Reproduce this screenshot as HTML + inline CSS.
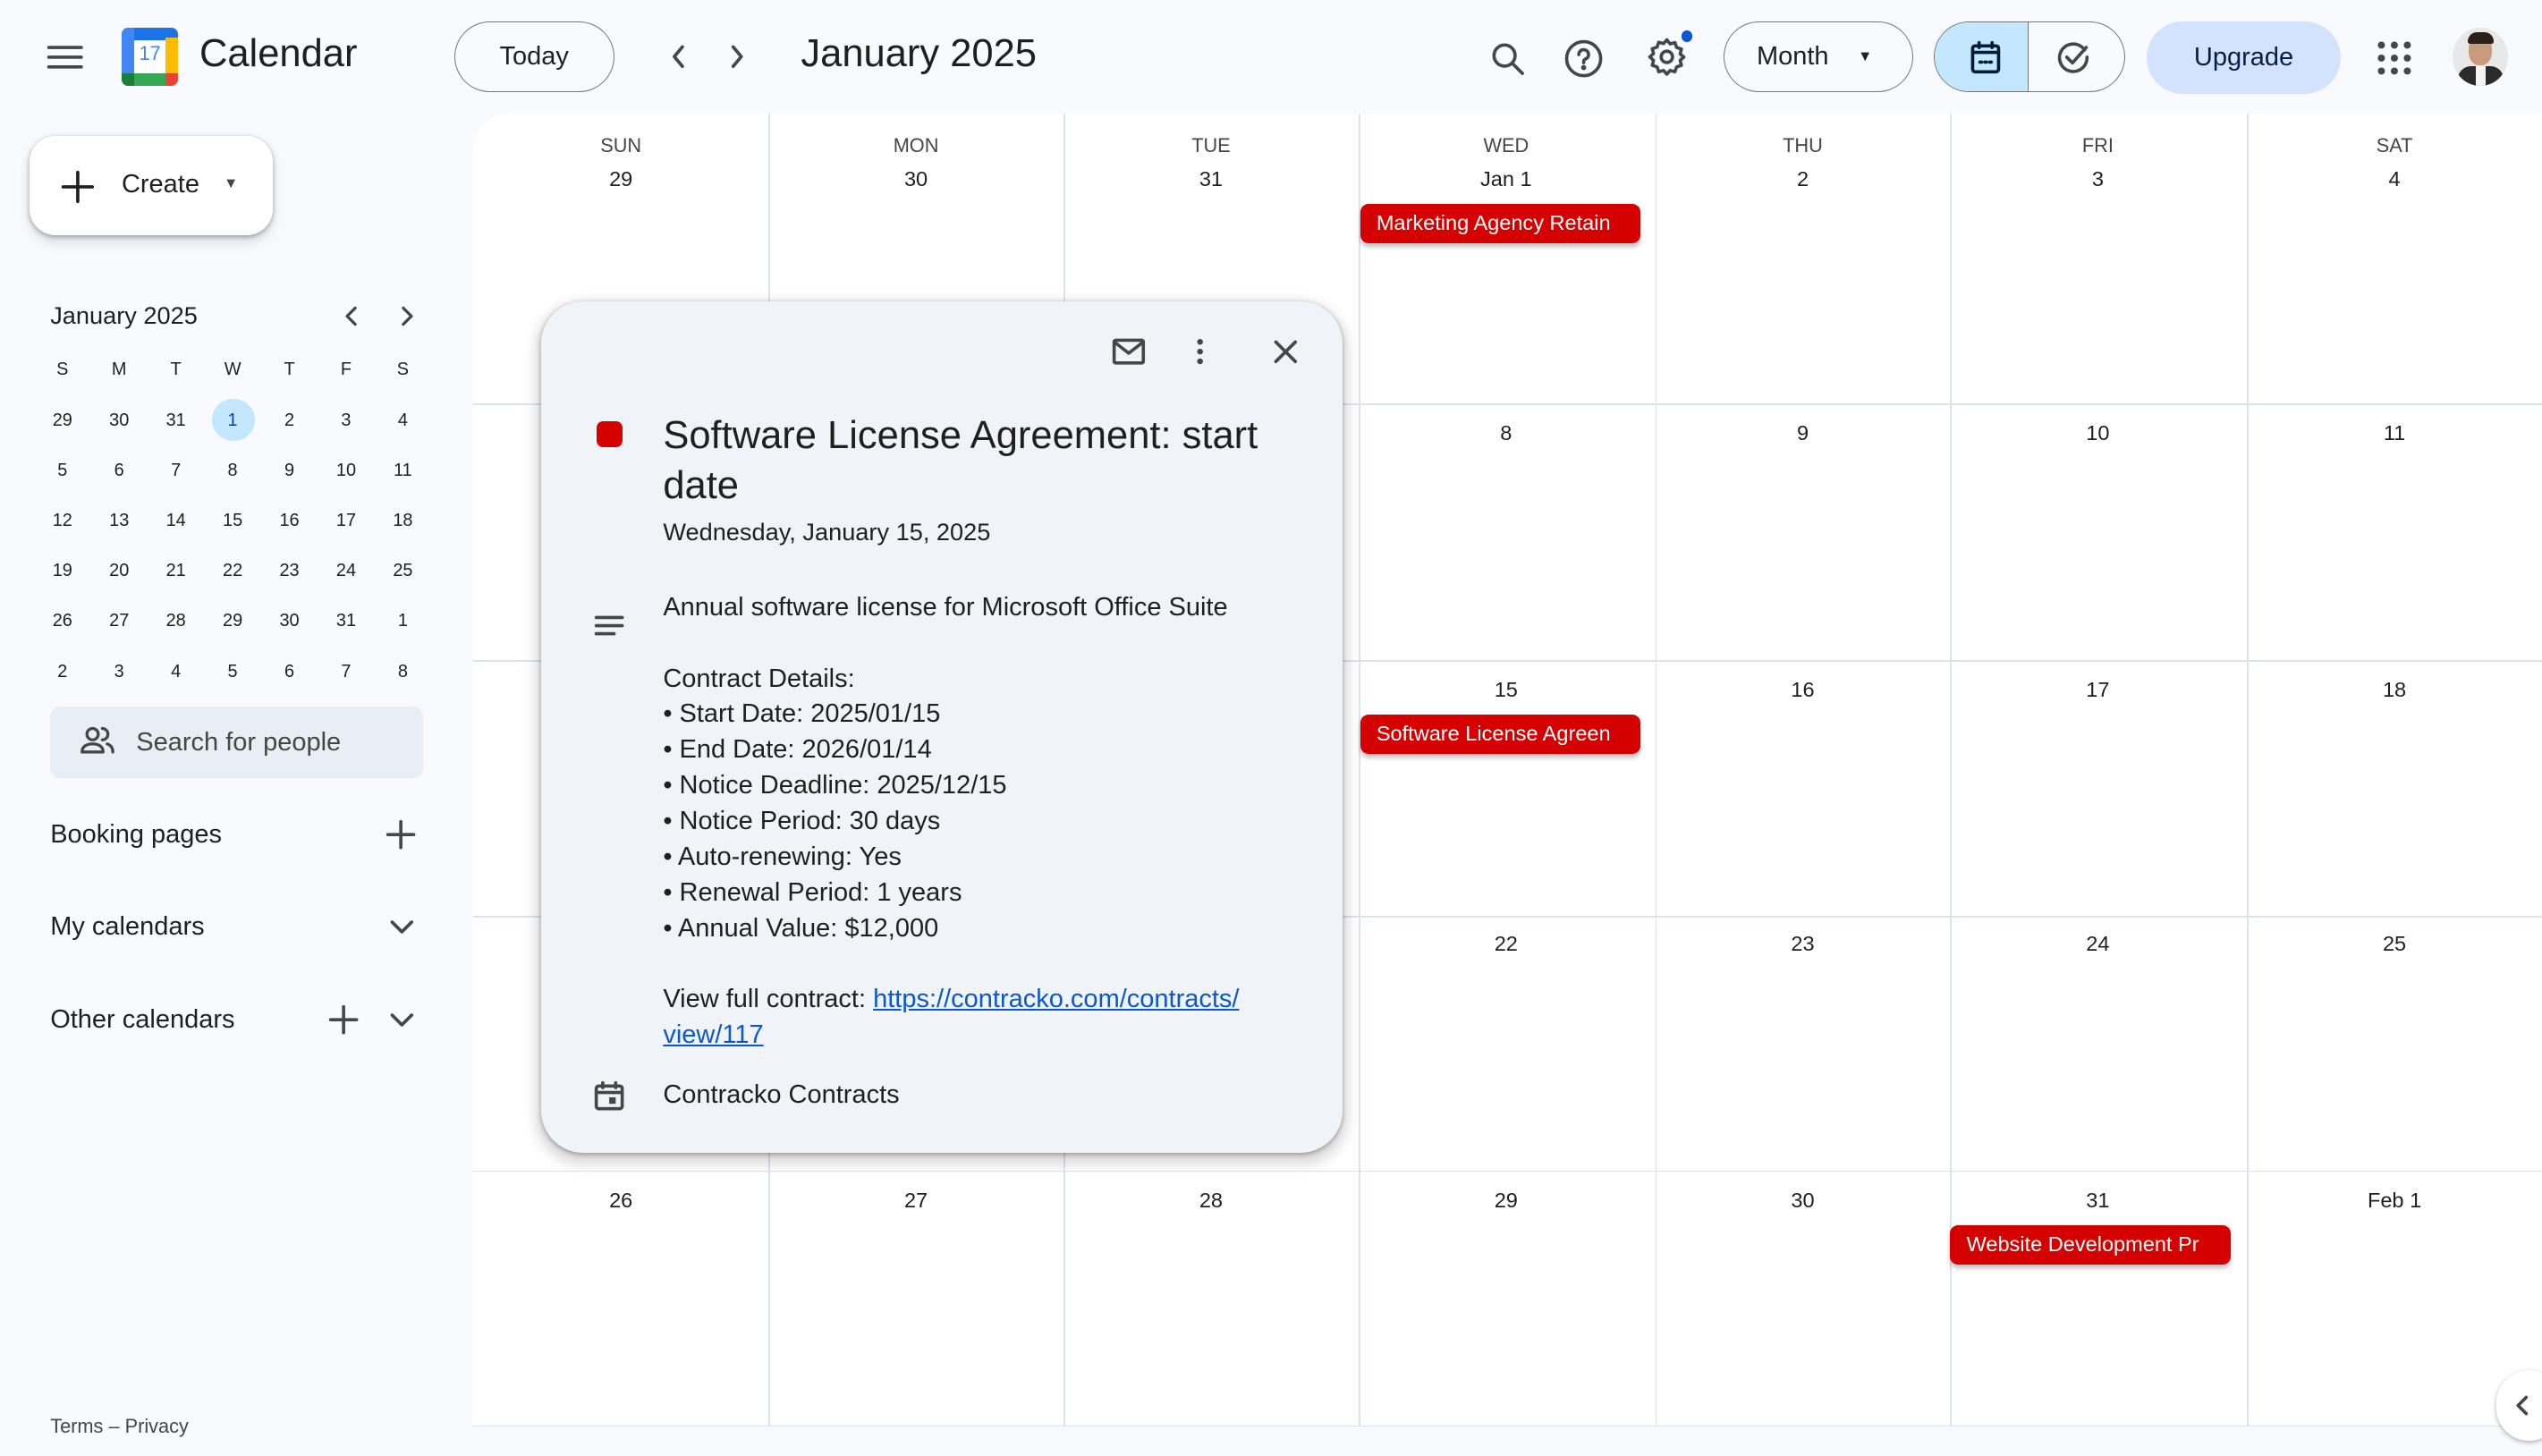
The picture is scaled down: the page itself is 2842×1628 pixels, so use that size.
<!DOCTYPE html>
<html><head><meta charset="utf-8"><style>
*{box-sizing:border-box;margin:0;padding:0}
html,body{width:2842px;height:1628px;overflow:hidden;background:#f8fafd}
#r{zoom:1.8125;position:relative;width:1568px;height:899px;font-family:"Liberation Sans",Arial,sans-serif;color:#1f1f1f;background:#f8fafd}
.a{position:absolute}
.ic{position:absolute;fill:none;stroke:#444746;stroke-width:2;stroke-linecap:round;stroke-linejoin:round}
.pill{position:absolute;border:1px solid #747775;border-radius:22px;display:flex;align-items:center;justify-content:center;font-size:16px;color:#1f1f1f}
.mini{position:absolute;left:21px;width:245px;font-size:11px;color:#1f1f1f}
.mini div{position:absolute;width:35px;text-align:center}
.dh{position:absolute;width:182px;text-align:center;font-size:12px;color:#444746}
.dn{position:absolute;width:182px;text-align:center;font-size:13px;color:#1f1f1f}
.ev{position:absolute;height:24px;background:#d50000;color:#fff;font-size:13px;border-radius:5px;padding:4px 10px;white-space:nowrap;overflow:hidden;box-shadow:0 2px 3px rgba(0,0,0,.25)}
.pt{position:absolute;left:409px;font-size:16px;color:#1f1f1f;line-height:22px}
</style></head><body><div id="r">
<!-- top bar -->
<svg class="ic" style="left:28px;top:24px" width="24" height="22"><path d="M2 5h20M2 11h20M2 17h20"/></svg>
<div class="a" style="left:75px;top:17px;width:35px;height:36px;border-radius:4px;overflow:hidden;background:#fff">
<div class="a" style="left:0;top:0;width:35px;height:8px;background:#1a73e8"></div>
<div class="a" style="left:0;top:0;width:8px;height:28px;background:#4285f4"></div>
<div class="a" style="left:27px;top:6px;width:8px;height:22px;background:#fbbc04"></div>
<div class="a" style="left:0;top:28px;width:27px;height:8px;background:#34a853"></div>
<div class="a" style="left:0;top:28px;width:8px;height:8px;background:#188038"></div>
<div class="a" style="left:27px;top:28px;width:8px;height:8px;background:#ea4335"></div>
<div class="a" style="left:8px;top:9px;width:19px;text-align:center;font-size:12px;color:#4285f4">17</div></div>
<div class="a" style="left:123px;top:20px;font-size:24px;color:#1f1f1f">Calendar</div>
<div class="pill" style="left:280px;top:13px;width:99px;height:44px">Today</div>
<svg class="ic" style="left:410px;top:26px" width="18" height="18"><path d="M11 3l-5 6 5 6"/></svg>
<svg class="ic" style="left:445px;top:26px" width="18" height="18"><path d="M7 3l5 6-5 6"/></svg>
<div class="a" style="left:494px;top:20px;font-size:24px">January 2025</div>
<svg class="ic" style="left:918px;top:24px" width="24" height="24"><circle cx="10" cy="10" r="6.5"/><path d="M15 15l6 6"/></svg>
<svg class="ic" style="left:964px;top:23px" width="26" height="26"><circle cx="13" cy="13" r="10.5"/><path d="M10 10.5a3 3 0 1 1 4 2.8c-1 .4-1 1.2-1 2.2"/><circle cx="13" cy="18.5" r=".6" fill="#444746"/></svg>
<svg class="ic" style="left:1015px;top:22px" width="26" height="26"><circle cx="13" cy="13" r="3.5"/><path d="M13 2.5l2 2.5 3-.8 1 3 3 1-.8 3 2.3 2-2.3 2 .8 3-3 1-1 3-3-.8-2 2.3-2-2.3-3 .8-1-3-3-1 .8-3L2.5 13l2.3-2-.8-3 3-1 1-3 3 .8z"/></svg>
<div class="a" style="left:1037px;top:19px;width:7px;height:7px;border-radius:50%;background:#0b57d0"></div>
<div class="pill" style="left:1063px;top:13px;width:117px;height:44px;justify-content:flex-start;padding-left:20px">Month<span style="margin-left:18px;font-size:9px">▼</span></div>
<div class="a" style="left:1193px;top:13px;width:118px;height:44px;border:1px solid #747775;border-radius:22px;overflow:hidden">
<div class="a" style="left:0;top:0;width:58px;height:44px;background:#c2e7ff;border-right:1px solid #747775"></div></div>
<svg class="ic" style="left:1214px;top:24px;stroke:#001d35" width="22" height="22"><rect x="3" y="4" width="16" height="16" rx="1.5"/><path d="M3 8h16M7 2v3M15 2v3M7.5 14h1M10.5 14h1M13.5 14h1"/></svg>
<svg class="ic" style="left:1268px;top:24px" width="22" height="22"><path d="M18 6.5A8.5 8.5 0 1 0 19.5 11"/><path d="M7 11l3.5 3.5L19 5"/></svg>
<div class="a" style="left:1324px;top:13px;width:120px;height:45px;border-radius:23px;background:#d3e3fd;color:#041e49;font-size:16px;display:flex;align-items:center;justify-content:center">Upgrade</div>
<svg class="a" style="left:1466px;top:25px" width="22" height="22" fill="#444746"><circle cx="3" cy="3" r="2.2"/><circle cx="11" cy="3" r="2.2"/><circle cx="19" cy="3" r="2.2"/><circle cx="3" cy="11" r="2.2"/><circle cx="11" cy="11" r="2.2"/><circle cx="19" cy="11" r="2.2"/><circle cx="3" cy="19" r="2.2"/><circle cx="11" cy="19" r="2.2"/><circle cx="19" cy="19" r="2.2"/></svg>
<div class="a" style="left:1513px;top:17px;width:34px;height:36px;border-radius:50%;overflow:hidden;background:#e8e8e8">
<div class="a" style="left:10px;top:5px;width:14px;height:18px;border-radius:45%;background:#c99a7c"></div>
<div class="a" style="left:9px;top:3px;width:16px;height:7px;border-radius:8px 8px 2px 2px;background:#2a1f1a"></div>
<div class="a" style="left:3px;top:24px;width:28px;height:14px;border-radius:8px 8px 0 0;background:#2b2b2b"></div>
<div class="a" style="left:14px;top:24px;width:6px;height:12px;background:#f3f3f3"></div></div>
<!-- create -->
<div class="a" style="left:18px;top:84px;width:150px;height:61px;border-radius:16px;background:#fff;box-shadow:0 1px 3px rgba(0,0,0,.3),0 4px 8px rgba(0,0,0,.12)"></div>
<svg class="ic" style="left:37px;top:104px;stroke:#1f1f1f" width="22" height="22"><path d="M11 2v18M2 11h18"/></svg>
<div class="a" style="left:75px;top:105px;font-size:16px;color:#1f1f1f">Create</div>
<div class="a" style="left:138px;top:108px;font-size:9px;color:#444746">▼</div>
<!-- mini cal -->
<div class="a" style="left:31px;top:186px;font-size:15px;color:#1f1f1f">January 2025</div>
<svg class="ic" style="left:209px;top:187px;stroke-width:1.8" width="16" height="16"><path d="M10 3l-5 5 5 5"/></svg>
<svg class="ic" style="left:243px;top:187px;stroke-width:1.8" width="16" height="16"><path d="M6 3l5 5-5 5"/></svg>
<div class="mini" style="top:222px"><div style="left:0">S</div><div style="left:35px">M</div><div style="left:70px">T</div><div style="left:105px">W</div><div style="left:140px">T</div><div style="left:175px">F</div><div style="left:210px">S</div></div>
<div class="a" style="left:131px;top:246px;width:26px;height:26px;border-radius:50%;background:#c2e7ff"></div>
<div class="mini" style="top:253px"><div style="left:0">29</div><div style="left:35px">30</div><div style="left:70px">31</div><div style="left:105px;color:#0842a0">1</div><div style="left:140px">2</div><div style="left:175px">3</div><div style="left:210px">4</div></div>
<div class="mini" style="top:284px"><div style="left:0">5</div><div style="left:35px">6</div><div style="left:70px">7</div><div style="left:105px">8</div><div style="left:140px">9</div><div style="left:175px">10</div><div style="left:210px">11</div></div>
<div class="mini" style="top:315px"><div style="left:0">12</div><div style="left:35px">13</div><div style="left:70px">14</div><div style="left:105px">15</div><div style="left:140px">16</div><div style="left:175px">17</div><div style="left:210px">18</div></div>
<div class="mini" style="top:346px"><div style="left:0">19</div><div style="left:35px">20</div><div style="left:70px">21</div><div style="left:105px">22</div><div style="left:140px">23</div><div style="left:175px">24</div><div style="left:210px">25</div></div>
<div class="mini" style="top:377px"><div style="left:0">26</div><div style="left:35px">27</div><div style="left:70px">28</div><div style="left:105px">29</div><div style="left:140px">30</div><div style="left:175px">31</div><div style="left:210px">1</div></div>
<div class="mini" style="top:408px"><div style="left:0">2</div><div style="left:35px">3</div><div style="left:70px">4</div><div style="left:105px">5</div><div style="left:140px">6</div><div style="left:175px">7</div><div style="left:210px">8</div></div>
<div class="a" style="left:31px;top:436px;width:230px;height:44px;border-radius:6px;background:#e9eef6"></div>
<svg class="ic" style="left:49px;top:447px;stroke-width:1.8" width="22" height="20"><circle cx="8" cy="6" r="3.5"/><path d="M1.5 17c0-3.5 3-5 6.5-5s6.5 1.5 6.5 5zM14 2.5a3.5 3.5 0 0 1 0 7M17 12c2 .7 3.5 2 3.5 5"/></svg>
<div class="a" style="left:84px;top:449px;font-size:16px;color:#444746">Search for people</div>
<div class="a" style="left:31px;top:506px;font-size:16px">Booking pages</div>
<svg class="ic" style="left:237px;top:505px" width="20" height="20"><path d="M10 2v16M2 10h16"/></svg>
<div class="a" style="left:31px;top:563px;font-size:16px">My calendars</div>
<svg class="ic" style="left:239px;top:564px" width="18" height="16"><path d="M3 5l6 6 6-6"/></svg>
<div class="a" style="left:31px;top:620px;font-size:16px">Other calendars</div>
<svg class="ic" style="left:202px;top:619px" width="20" height="20"><path d="M10 2v16M2 10h16"/></svg>
<svg class="ic" style="left:239px;top:621px" width="18" height="16"><path d="M3 5l6 6 6-6"/></svg>
<div class="a" style="left:31px;top:873px;font-size:12px;color:#444746">Terms – Privacy</div>
<!-- grid -->
<div class="a" style="left:292px;top:70px;width:1290px;height:810px;background:#fff;border-radius:22px 0 0 0;border-bottom:1px solid #dde3ea"></div>
<div class="a" style="left:474px;top:70px;width:1px;height:810px;background:#dde3ea"></div>
<div class="a" style="left:656px;top:70px;width:1px;height:810px;background:#dde3ea"></div>
<div class="a" style="left:838px;top:70px;width:1px;height:810px;background:#dde3ea"></div>
<div class="a" style="left:1021px;top:70px;width:1px;height:810px;background:#dde3ea"></div>
<div class="a" style="left:1203px;top:70px;width:1px;height:810px;background:#dde3ea"></div>
<div class="a" style="left:1386px;top:70px;width:1px;height:810px;background:#dde3ea"></div>
<div class="a" style="left:292px;top:249px;width:1276px;height:1px;background:#dde3ea"></div>
<div class="a" style="left:292px;top:407px;width:1276px;height:1px;background:#dde3ea"></div>
<div class="a" style="left:292px;top:565px;width:1276px;height:1px;background:#dde3ea"></div>
<div class="a" style="left:292px;top:722px;width:1276px;height:1px;background:#dde3ea"></div>
<div class="dh" style="left:292px;top:83px">SUN</div><div class="dh" style="left:474px;top:83px">MON</div><div class="dh" style="left:656px;top:83px">TUE</div><div class="dh" style="left:838px;top:83px">WED</div><div class="dh" style="left:1021px;top:83px">THU</div><div class="dh" style="left:1203px;top:83px">FRI</div><div class="dh" style="left:1386px;top:83px">SAT</div>
<div class="dn" style="left:292px;top:103px">29</div><div class="dn" style="left:474px;top:103px">30</div><div class="dn" style="left:656px;top:103px">31</div><div class="dn" style="left:838px;top:103px">Jan 1</div><div class="dn" style="left:1021px;top:103px">2</div><div class="dn" style="left:1203px;top:103px">3</div><div class="dn" style="left:1386px;top:103px">4</div>
<div class="dn" style="left:838px;top:260px">8</div><div class="dn" style="left:1021px;top:260px">9</div><div class="dn" style="left:1203px;top:260px">10</div><div class="dn" style="left:1386px;top:260px">11</div>
<div class="dn" style="left:838px;top:418px">15</div><div class="dn" style="left:1021px;top:418px">16</div><div class="dn" style="left:1203px;top:418px">17</div><div class="dn" style="left:1386px;top:418px">18</div>
<div class="dn" style="left:838px;top:575px">22</div><div class="dn" style="left:1021px;top:575px">23</div><div class="dn" style="left:1203px;top:575px">24</div><div class="dn" style="left:1386px;top:575px">25</div>
<div class="dn" style="left:292px;top:733px">26</div><div class="dn" style="left:474px;top:733px">27</div><div class="dn" style="left:656px;top:733px">28</div><div class="dn" style="left:838px;top:733px">29</div><div class="dn" style="left:1021px;top:733px">30</div><div class="dn" style="left:1203px;top:733px">31</div><div class="dn" style="left:1386px;top:733px">Feb 1</div>
<div class="ev" style="left:839px;top:126px;width:173px">Marketing Agency Retain</div>
<div class="ev" style="left:839px;top:441px;width:173px">Software License Agreen</div>
<div class="ev" style="left:1203px;top:756px;width:173px">Website Development Pr</div>
<div class="a" style="left:1540px;top:845px;width:40px;height:44px;border-radius:22px;background:#fff;box-shadow:0 1px 3px rgba(0,0,0,.3)"></div>
<svg class="ic" style="left:1549px;top:859px" width="14" height="16"><path d="M9 3l-5 5 5 5"/></svg>
<!-- popup -->
<div class="a" style="left:334px;top:186px;width:494px;height:525px;border-radius:26px;background:#f0f4f9;box-shadow:0 4px 8px 3px rgba(0,0,0,.15),0 1px 3px rgba(0,0,0,.3)"></div>
<svg class="ic" style="left:685px;top:207px" width="22" height="20"><rect x="2" y="3" width="18" height="14" rx="1"/><path d="M2 4l9 7 9-7"/></svg>
<svg class="a" style="left:733px;top:207px" width="14" height="20" fill="#444746"><circle cx="7" cy="4" r="1.8"/><circle cx="7" cy="10" r="1.8"/><circle cx="7" cy="16" r="1.8"/></svg>
<svg class="ic" style="left:784px;top:208px" width="18" height="18"><path d="M3 3l12 12M15 3L3 15"/></svg>
<div class="a" style="left:368px;top:260px;width:16px;height:16px;border-radius:4px;background:#d50000"></div>
<div class="a" style="left:409px;top:253px;width:400px;font-size:24px;line-height:31px;color:#1f1f1f">Software License Agreement: start date</div>
<div class="pt" style="top:317px;font-size:15px;color:#1f1f1f">Wednesday, January 15, 2025</div>
<svg class="ic" style="left:366px;top:378px" width="20" height="16"><path d="M2 3h16M2 8h16M2 13h11"/></svg>
<div class="pt" style="top:364px;width:400px">Annual software license for Microsoft Office Suite<br><br>Contract Details:<br>• Start Date: 2025/01/15<br>• End Date: 2026/01/14<br>• Notice Deadline: 2025/12/15<br>• Notice Period: 30 days<br>• Auto-renewing: Yes<br>• Renewal Period: 1 years<br>• Annual Value: $12,000<br><br>View full contract: <span style="color:#0b57d0;text-decoration:underline">https://contracko.com/contracts/ view/117</span></div>
<svg class="ic" style="left:366px;top:666px" width="20" height="20"><rect x="2" y="4" width="16" height="14" rx="1.5"/><path d="M2 8h16M6 2v3M14 2v3"/><rect x="10" y="11" width="4" height="4" fill="#444746" stroke="none"/></svg>
<div class="pt" style="top:665px">Contracko Contracts</div>
</div></body></html>
